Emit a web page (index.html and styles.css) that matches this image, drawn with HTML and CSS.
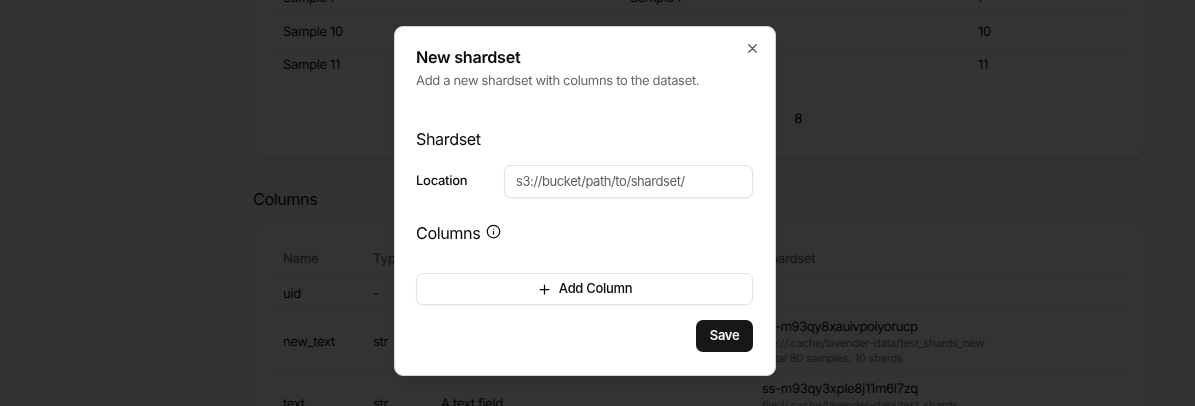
FILE: index.html
```html
<!DOCTYPE html>
<html lang="en">
<head>
<meta charset="utf-8">
<title>New shardset</title>
<link rel="stylesheet" href="styles.css">
</head>
<body>
<div class="app">
  <aside class="sidebar"></aside>
  <main class="main">
    <section class="card samples">
      <div class="row sample"><span>Sample 7</span><span>Sample 7</span><span>7</span></div>
      <div class="row sample"><span>Sample 10</span><span>Sample 10</span><span>10</span></div>
      <div class="row sample last"><span>Sample 11</span><span>Sample 11</span><span>11</span></div>
      <div class="pages"><svg class="dots" viewBox="0 0 24 24"><circle cx="5" cy="12" r="1"/><circle cx="12" cy="12" r="1"/><circle cx="19" cy="12" r="1"/></svg><span>8</span></div>
    </section>
    <h2 class="heading">Columns</h2>
    <section class="card columns">
      <div class="row column head"><span>Name</span><span>Type</span><span>Description</span><span>Shardset</span></div>
      <div class="row column uid"><span>uid</span><span>-</span><span></span><span></span></div>
      <div class="row column tall"><span>new_text</span><span>str</span><span></span>
        <div><p class="id">ss-m93qy8xauivpoiyorucp</p><p class="meta">file://.cache/lavender-data/test_shards_new</p><p class="meta">Total 80 samples, 10 shards</p></div></div>
      <div class="row column tall"><span>text</span><span>str</span><span>A text field</span>
        <div><p class="id id-tight">ss-m93qy3xple8j11m6l7zq</p><p class="meta">file://.cache/lavender-data/test_shards</p><p class="meta">Total 100 samples, 10 shards</p></div></div>
    </section>
  </main>
</div>
<div class="overlay"></div>
<div class="dialog" role="dialog">
  <h1 class="title">New shardset</h1>
  <p class="subtitle">Add a new shardset with columns to the dataset.</p>
  <h2 class="section">Shardset</h2>
  <div class="field"><label class="label" for="loc">Location</label><input class="input" id="loc" placeholder="s3://bucket/path/to/shardset/"></div>
  <h2 class="section section-columns">Columns
    <svg class="info" viewBox="0 0 24 24"><circle cx="12" cy="12" r="10"/><path d="M12 16v-4M12 8h.01"/></svg>
  </h2>
  <button class="button add"><svg class="plus" viewBox="0 0 24 24"><path d="M5 12h14M12 5v14"/></svg><span>Add Column</span></button>
  <button class="button save"><span>Save</span></button>
  <svg class="close" viewBox="0 0 24 24"><path d="M18 6 6 18M6 6l12 12"/></svg>
</div>
</body>
</html>
```
FILE: styles.css
```css
* { box-sizing: border-box; }
body { margin: 0; height: 406px; overflow: hidden; background: #fafafa; color: #0a0a0a; font: 13px/18px Inter, sans-serif; letter-spacing: -.34px; text-rendering: geometricPrecision; }
h1, h2, p { margin: 0; font-weight: 400; }
.app { display: flex; height: 406px; overflow: hidden; }
.sidebar { width: 155px; flex: none; border-right: 1px solid #ebebeb; }
.main { width: 893px; margin-left: 98px; }
.card { background: #fff; border: 1px solid #ededed; border-radius: 13px; padding: 0 22px; box-shadow: 0 1px 3px rgba(0,0,0,.1); }
.samples { height: 177px; margin-top: -19px; }
.row { display: grid; align-items: center; padding: 0 7px; border-bottom: 1px solid #e5e5e5; }
.sample { grid-template-columns: 347px 348px 1fr; height: 34px; }
.sample.last { height: 32px; border-bottom: 0; }
.sample:first-child { height: 33px; }
.pages { display: flex; justify-content: flex-end; align-items: center; gap: 16px; margin: 29px 321px 0 0; font-weight: 500; }
.heading { font-size: 16.2px; line-height: 24px; margin: 29px 0 8px; }
.columns { height: 260px; padding-top: 21px; }
.column { grid-template-columns: 90px 68px 321px 1fr; }
.head { height: 37px; color: #737373; font-weight: 500; letter-spacing: -.24px; }
.uid { height: 33px; }
.tall { height: 62px; }
.id { line-height: 18px; letter-spacing: -.4px; }
.id-tight { letter-spacing: -.3px; }
.meta { color: #737373; font-size: 11px; line-height: 15px; letter-spacing: -.13px; }
.overlay { position: fixed; inset: 0; background: rgba(0,0,0,.8); }
.dialog { position: fixed; left: 394px; top: 26px; width: 382px; height: 349.5px; display: flex; flex-direction: column; padding: 19px 22px 20px 21px; background: #fff; border: 1px solid #d4d4d4; border-radius: 9px; box-shadow: 0 9px 14px -3px rgba(0,0,0,.1); }
.title { font-size: 16.2px; line-height: 22px; font-weight: 600; letter-spacing: -.28px; }
.subtitle { color: #666; margin-top: 4px; letter-spacing: -.33px; }
.section, .heading { letter-spacing: -.42px; }
.section { font-size: 16.2px; line-height: 24px; margin-top: 37px; }
.field { display: flex; justify-content: space-between; align-items: center; margin-top: 14px; }
.label { font-weight: 500; margin-top: -2px; letter-spacing: -.28px; }
.input { width: 249px; height: 33px; padding: 0 11px 1px; border: 1px solid #e2e2e2; border-radius: 7px; background: #fff; font: inherit; letter-spacing: -.42px; box-shadow: 0 1px 2px rgba(0,0,0,.05); }
.input::placeholder { color: #606060; }
.section-columns { display: flex; gap: 6px; margin-top: 23px; }
svg { fill: none; stroke: currentColor; stroke-width: 2; stroke-linecap: round; stroke-linejoin: round; }
.dots { width: 15px; height: 15px; margin-right: 1px; }
.info { width: 15px; height: 15px; margin-top: 3px; }
.button { display: flex; align-items: center; justify-content: center; font: 500 13px/18px Inter, sans-serif; letter-spacing: -.32px; height: 32px; flex: none; border-radius: 7px; padding: 0; color: #0a0a0a; }
.add { gap: 7px; margin-top: 28px; background: #fff; border: 1px solid #e2e2e2; box-shadow: 0 1px 2px rgba(0,0,0,.05); }
.add span { margin-top: -2px; }
.plus { width: 15px; height: 15px; }
.save { width: 57px; margin-top: 15px; align-self: flex-end; background: #171717; border: 0; color: #fafafa; font-weight: 600; }
.save span { margin-top: -2px; }
.close { position: absolute; right: 15px; top: 14px; width: 15px; height: 15px; opacity: .7; }
```
